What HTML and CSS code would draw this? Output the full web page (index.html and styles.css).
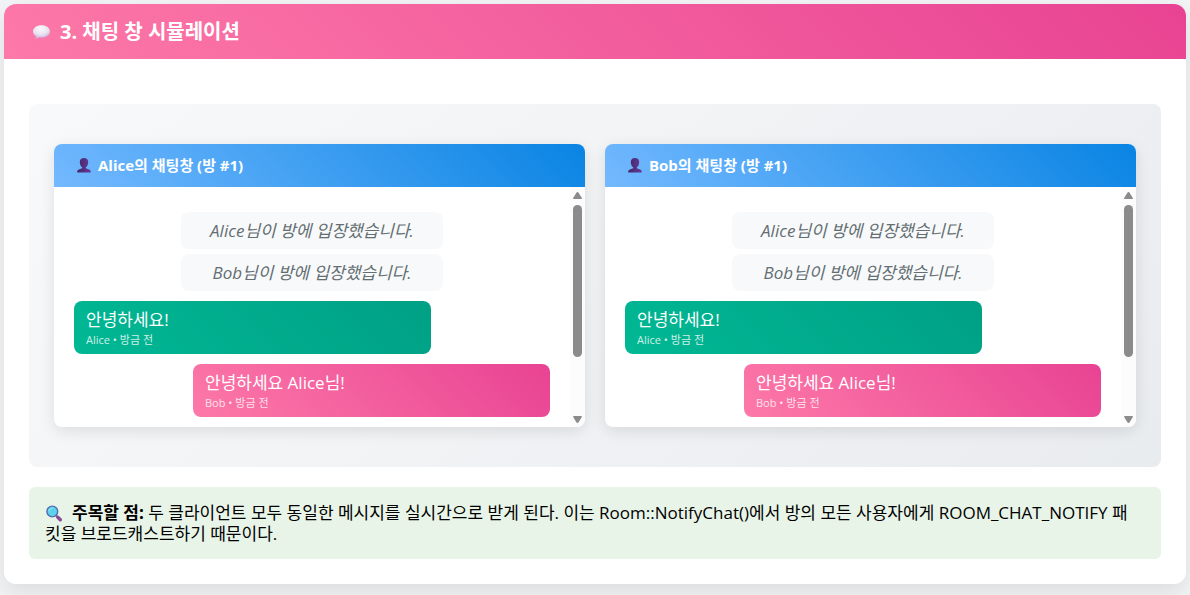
FILE: index.html
```html
<!DOCTYPE html>
<html lang="ko">
<head>
<meta charset="utf-8">
<meta name="viewport" content="width=device-width, initial-scale=1">
<title>채팅 창 시뮬레이션</title>
<link rel="stylesheet" href="styles.css">
</head>
<body>
<svg class="defs" aria-hidden="true">
  <defs>
    <radialGradient id="bubble-fill" cx="45%" cy="25%" r="75%">
      <stop offset="0" stop-color="#fbf8fc"/><stop offset="0.6" stop-color="#e9e2f0"/><stop offset="1" stop-color="#c3b1da"/>
    </radialGradient>
    <linearGradient id="bust-fill" x1="0" y1="0" x2="1" y2="0">
      <stop offset="0" stop-color="#432768"/><stop offset="1" stop-color="#663b99"/>
    </linearGradient>
    <symbol id="bust" viewBox="0 0 14 15">
      <path fill="url(#bust-fill)" d="M7 0C4.400 0 2.800 1.600 2.800 4c0 2.300 1 4.500 2.400 5.300v.9L1.800 11.500C.6 12 .2 12.700.2 14.500h13.600c0-1.800-.4-2.500-1.600-3L8.800 10.200v-.9C10.200 8.500 11.200 6.300 11.200 4 11.200 1.600 9.600 0 7 0z"/>
    </symbol>
  </defs>
</svg>
<section class="card">
  <h2 class="card-title">
    <svg class="title-icon" viewBox="0 0 18 14" aria-hidden="true"><path fill="url(#bubble-fill)" d="M9 .3C4.200.3.500 3 .500 6.400c0 2.100 1.300 3.800 3.300 4.800-.1.900-.5 1.500-1 2-.2.300 0 .5.300.4 1.500-.2 2.800-.7 3.800-1.400.7.100 1.400.2 2.100.2 4.800 0 8.500-2.600 8.500-6S13.800.3 9 .3z"/></svg>
    3. 채팅 창 시뮬레이션
  </h2>
  <div class="card-body">
    <div class="stage">
      <article class="chat">
        <h3 class="chat-title"><svg class="bust" aria-hidden="true"><use href="#bust"/></svg>Alice의 채팅창 (방 #1)</h3>
        <div class="chat-view">
          <div class="messages">
            <p class="notice">Alice님이 방에 입장했습니다.</p>
            <p class="notice">Bob님이 방에 입장했습니다.</p>
            <div class="message from-alice"><p class="text">안녕하세요!</p><small class="meta">Alice • 방금 전</small></div>
            <div class="message from-bob"><p class="text">안녕하세요 Alice님!</p><small class="meta">Bob • 방금 전</small></div>
          </div>
          <div class="scrollbar" aria-hidden="true">
            <svg class="arrow" viewBox="0 0 9 7"><path d="M4.500 0C5 0 5.300.300 5.600.800L8.700 5.700C9.200 6.500 8.900 7 8 7H1C.1 7-.2 6.500.3 5.700L3.400.8C3.700.3 4 0 4.500 0z"/></svg>
            <div class="track"><div class="thumb"></div></div>
            <svg class="arrow down" viewBox="0 0 9 7"><path d="M4.500 0C5 0 5.300.300 5.600.800L8.700 5.700C9.200 6.500 8.900 7 8 7H1C.1 7-.2 6.500.3 5.700L3.400.8C3.700.3 4 0 4.500 0z"/></svg>
          </div>
        </div>
      </article>
      <article class="chat">
        <h3 class="chat-title"><svg class="bust" aria-hidden="true"><use href="#bust"/></svg>Bob의 채팅창 (방 #1)</h3>
        <div class="chat-view">
          <div class="messages">
            <p class="notice">Alice님이 방에 입장했습니다.</p>
            <p class="notice">Bob님이 방에 입장했습니다.</p>
            <div class="message from-alice"><p class="text">안녕하세요!</p><small class="meta">Alice • 방금 전</small></div>
            <div class="message from-bob"><p class="text">안녕하세요 Alice님!</p><small class="meta">Bob • 방금 전</small></div>
          </div>
          <div class="scrollbar" aria-hidden="true">
            <svg class="arrow" viewBox="0 0 9 7"><path d="M4.500 0C5 0 5.300.300 5.600.800L8.700 5.700C9.200 6.500 8.900 7 8 7H1C.1 7-.2 6.500.3 5.700L3.400.8C3.700.3 4 0 4.500 0z"/></svg>
            <div class="track"><div class="thumb"></div></div>
            <svg class="arrow down" viewBox="0 0 9 7"><path d="M4.500 0C5 0 5.300.300 5.600.800L8.700 5.700C9.200 6.500 8.900 7 8 7H1C.1 7-.2 6.500.3 5.700L3.400.8C3.700.3 4 0 4.500 0z"/></svg>
          </div>
        </div>
      </article>
    </div>
    <p class="note"><svg class="note-icon" viewBox="0 0 17 17" aria-hidden="true"><path d="M10.500 10.500l2 2" stroke="#7a6a9a" stroke-width="2"/><path d="M12.300 12.300l2.500 2.500" stroke="#8b4a94" stroke-width="3.400" stroke-linecap="round"/><circle cx="6.800" cy="6.500" r="5.400" fill="#5fd0ee" stroke="#4f6fae" stroke-width="1.400"/><path d="M3.500 6A3.500 3.500 0 0 1 7 3" fill="none" stroke="#8be2f6" stroke-width="1.200" stroke-linecap="round"/></svg><strong>주목할 점:</strong> 두 클라이언트 모두 동일한 메시지를 실시간으로 받게 된다. 이는 Room::NotifyChat()에서 방의 모든 사용자에게 ROOM_CHAT_NOTIFY 패킷을 브로드캐스트하기 때문이다.</p>
  </div>
</section>
</body>
</html>
```
FILE: styles.css
```css
* { box-sizing: border-box; }
body {
  margin: 0;
  padding: 4px 4px 12px;
  background: #f3f4f5;
  color: #000;
  font-family: "Open Sans", "Noto Sans CJK KR", sans-serif;
  font-size: 17px;
  line-height: 21px;
}
h2, h3, p { margin: 0; }
.defs { position: absolute; width: 0; height: 0; }
.card {
  overflow: hidden;
  background: #fff;
  border-radius: 12px;
  box-shadow: 0 8px 25px rgba(0, 0, 0, 0.1);
}
.card-title {
  display: flex;
  align-items: center;
  gap: 9px;
  padding: 15px 28px;
  background: linear-gradient(45deg, #fd79a8, #e84393);
  color: #fff;
  font-size: 20px;
  line-height: 25px;
}
.title-icon { width: 19px; height: 14px; }
.card-body { padding: 45px 25px 25px; }
.stage {
  display: grid;
  grid-template-columns: 1fr 1fr;
  gap: 20px;
  padding: 40px 25px;
  background: linear-gradient(135deg, #f8f9fa, #e9ecef);
  border-radius: 8px;
}
.chat {
  overflow: hidden;
  background: #fff;
  border-radius: 8px;
  box-shadow: 0 4px 15px rgba(0, 0, 0, 0.1);
}
.chat-title {
  display: flex;
  align-items: center;
  gap: 7px;
  padding: 11px 23px;
  background: linear-gradient(45deg, #74b9ff, #0984e3);
  color: #fff;
  font-size: 15px;
  line-height: 21px;
}
.bust { width: 14px; height: 15px; }
.chat-view { display: flex; }
.messages { flex: 1; padding: 25px 20px 10px; }
.notice {
  width: 55%;
  margin: 0 auto 5px;
  padding: 8px;
  background: #f8f9fa;
  border-radius: 8px;
  color: #636e72;
  font-style: italic;
  text-align: center;
}
.message {
  width: 75%;
  margin-top: 10px;
  padding: 8px 12px 6px;
  border-radius: 8px;
  color: #fff;
}
.from-alice { background: linear-gradient(45deg, #00b894, #00a085); }
.from-bob { margin-left: auto; background: linear-gradient(45deg, #fd79a8, #e84393); }
.text { line-height: 22px; }
.meta {
  display: block;
  font-size: 11px;
  line-height: 17px;
  opacity: 0.8;
}
.scrollbar {
  display: flex;
  flex-direction: column;
  align-items: center;
  gap: 6px;
  width: 15px;
  padding: 5px 0 4px;
  background: #fcfcfc;
}
.arrow { width: 9px; height: 7px; fill: #8b8b8b; }
.down { transform: rotate(180deg); }
.track { flex: 1; width: 9px; }
.thumb { height: 74%; border-radius: 5px; background: #8b8b8b; }
.note {
  margin-top: 20px;
  padding: 15px 24px 15px 16px;
  background: #e8f4e8;
  border-radius: 6px;
  word-break: break-all;
}
.note-icon { width: 18px; height: 17px; margin-right: 9px; vertical-align: -3px; }
```
